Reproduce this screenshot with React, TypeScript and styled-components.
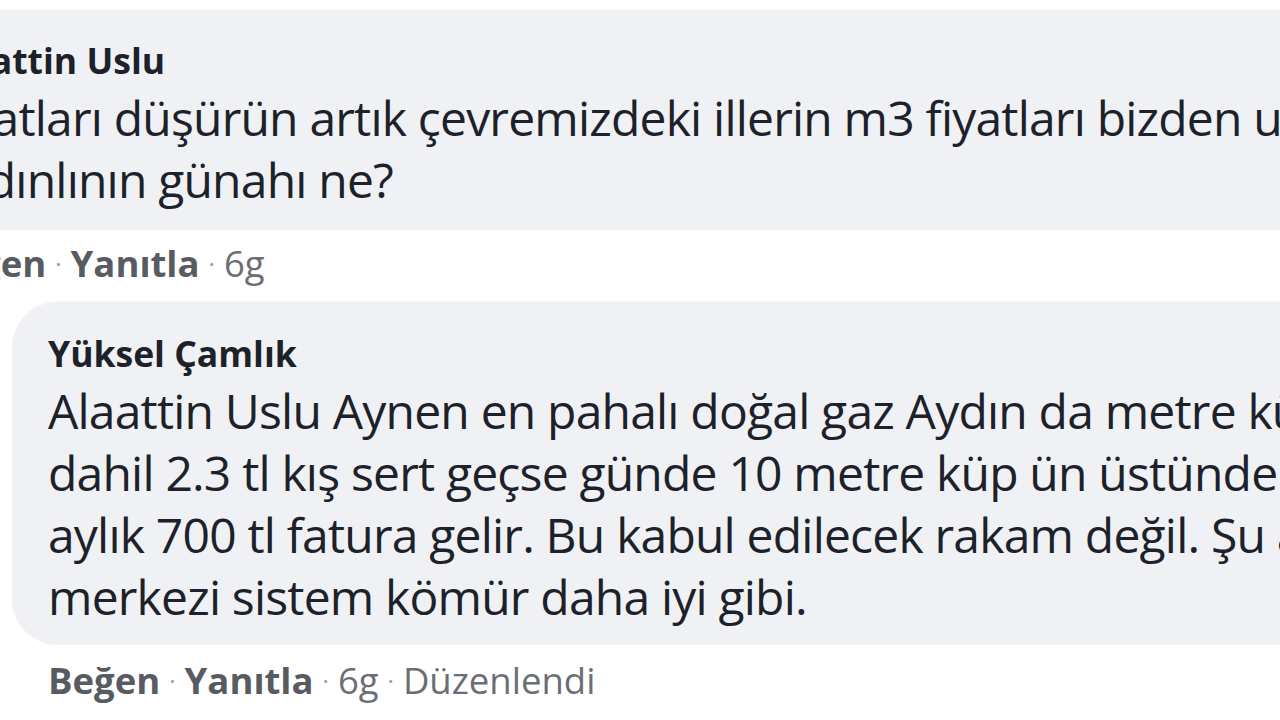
import React from "react";
import styled, { createGlobalStyle } from "styled-components";

const Global = createGlobalStyle`
  html, body { margin: 0; padding: 0; background: #ffffff; }
  body { font-family: "Open Sans", "Noto Sans", sans-serif; }
`;

const Page = styled.div`
  width: 1280px;
  height: 720px;
  overflow: hidden;
  background: #ffffff;
  display: flex;
  flex-direction: column;
  padding-top: 10px;
  box-sizing: border-box;
`;

const Comment = styled.div<{ $indent: number; $gapTop: number }>`
  display: flex;
  flex-direction: column;
  margin-left: ${(p) => p.$indent}px;
  margin-top: ${(p) => p.$gapTop}px;
`;

const Bubble = styled.div<{ $padLeft: number; $padTop: number; $padBottom: number }>`
  background: #eff1f5;
  border-radius: 46px;
  width: 1600px;
  padding: ${(p) => p.$padTop}px 0 ${(p) => p.$padBottom}px ${(p) => p.$padLeft}px;
  box-sizing: border-box;
  box-shadow: 0 -1px 2px rgba(0, 0, 0, 0.03);
`;

const Name = styled.div`
  font-weight: 700;
  font-size: 35.5px;
  line-height: 44px;
  margin-bottom: 5px;
  color: #1d2129;
  white-space: nowrap;
`;

const Line = styled.div`
  font-size: 48px;
  line-height: 62px;
  letter-spacing: -0.8px;
  color: #1d2129;
  white-space: nowrap;
`;

const Actions = styled.div<{ $padLeft: number; $h: number }>`
  display: flex;
  align-items: center;
  padding-left: ${(p) => p.$padLeft}px;
  font-size: 36.5px;
  height: ${(p) => p.$h}px;
  white-space: nowrap;
`;

const Action = styled.span`
  font-weight: 700;
  color: #585b62;
`;

const Meta = styled.span`
  font-weight: 400;
  color: #6b6e75;
`;

const Dot = styled.span`
  padding: 0 9px;
  color: #9a9da3;
  font-size: 24px;
`;

export default function App() {
  return (
    <>
      <Global />
      <Page>
        <Comment $indent={-114} $gapTop={0}>
          <Bubble $padLeft={48} $padTop={28} $padBottom={19}>
            <Name>Alaattin Uslu</Name>
            <Line>Fiyatları düşürün artık çevremizdeki illerin m3 fiyatları bizden ucuz,</Line>
            <Line>Aydınlının günahı ne?</Line>
          </Bubble>
          <Actions $padLeft={48} $h={66}>
            <Action>Beğen</Action>
            <Dot>·</Dot>
            <Action>Yanıtla</Action>
            <Dot>·</Dot>
            <Meta>6g</Meta>
          </Actions>
        </Comment>
        <Comment $indent={12} $gapTop={6}>
          <Bubble $padLeft={36} $padTop={29} $padBottom={17}>
            <Name>Yüksel Çamlık</Name>
            <Line>Alaattin Uslu Aynen en pahalı doğal gaz Aydın da metre küp vergiler</Line>
            <Line>dahil 2.3 tl kış sert geçse günde 10 metre küp ün üstünde doğalgaz yakılır</Line>
            <Line>aylık 700 tl fatura gelir. Bu kabul edilecek rakam değil. Şu anda</Line>
            <Line>merkezi sistem kömür daha iyi gibi.</Line>
          </Bubble>
          <Actions $padLeft={36} $h={70}>
            <Action>Beğen</Action>
            <Dot>·</Dot>
            <Action>Yanıtla</Action>
            <Dot>·</Dot>
            <Meta>6g</Meta>
            <Dot>·</Dot>
            <Meta>Düzenlendi</Meta>
          </Actions>
        </Comment>
      </Page>
    </>
  );
}
